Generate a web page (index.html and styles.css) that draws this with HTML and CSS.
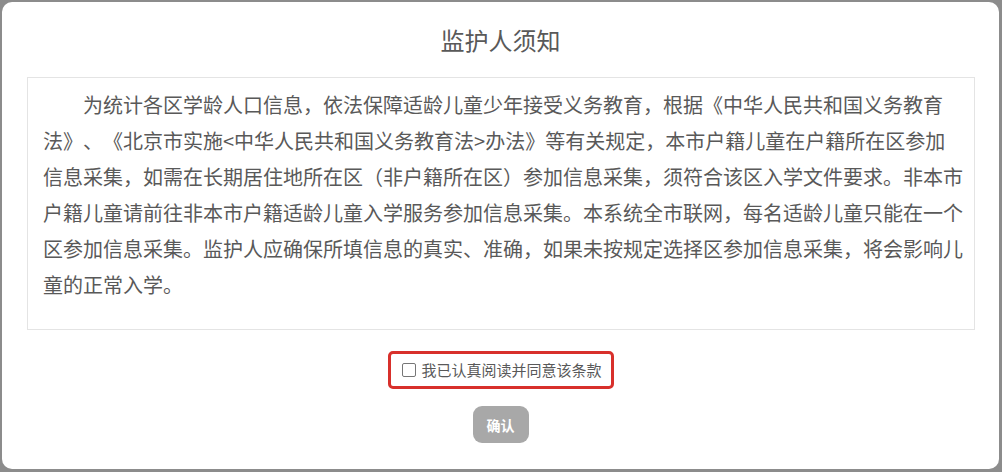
FILE: index.html
```html
<!DOCTYPE html>
<html lang="zh-CN">
<head>
<meta charset="utf-8">
<title>监护人须知</title>
<link rel="stylesheet" href="styles.css">
</head>
<body>
<div class="dialog">
  <h1 class="title">监护人须知</h1>
  <div class="notice">
    <p class="notice-text">为统计各区学龄人口信息，依法保障适龄儿童少年接受义务教育，根据《中华人民共和国义务教育法》、《北京市实施&lt;中华人民共和国义务教育法&gt;办法》等有关规定，本市户籍儿童在户籍所在区参加信息采集，如需在长期居住地所在区（非户籍所在区）参加信息采集，须符合该区入学文件要求。非本市户籍儿童请前往非本市户籍适龄儿童入学服务参加信息采集。本系统全市联网，每名适龄儿童只能在一个区参加信息采集。监护人应确保所填信息的真实、准确，如果未按规定选择区参加信息采集，将会影响儿童的正常入学。</p>
  </div>
  <label class="agree">
    <span class="check"></span>
    <span class="agree-text">我已认真阅读并同意该条款</span>
  </label>
  <button class="confirm" type="button">确认</button>
</div>
</body>
</html>
```
FILE: styles.css
```css
html, body {
  margin: 0;
  padding: 0;
}
body {
  width: 1002px;
  height: 472px;
  background: #8c8c8c;
  font-family: "Noto Sans CJK SC", "Noto Sans", "Liberation Sans", sans-serif;
  color: #595959;
  overflow: hidden;
  text-spacing-trim: space-all;
}
.dialog {
  margin: 2px 3px 0 2px;
  height: 467px;
  background: #fff;
  border-radius: 10px;
  display: flex;
  flex-direction: column;
  align-items: center;
  box-sizing: border-box;
}
.title {
  margin: 22px 0 21px;
  font-size: 24px;
  line-height: 32px;
  font-weight: normal;
  color: #595959;
}
.notice {
  align-self: stretch;
  margin: 0 24px 0 25px;
  border: 1px solid #e4e4e4;
  padding: 9px 10px 26px 15px;
}
.notice-text {
  margin: 0;
  font-size: 20px;
  line-height: 36px;
  text-indent: 2em;
  color: #595959;
  text-spacing-trim: space-all;
}
.agree {
  margin-top: 21px;
  height: 38px;
  width: 226px;
  box-sizing: border-box;
  border: 3px solid #d8302b;
  border-radius: 5px;
  display: flex;
  align-items: center;
  padding-left: 11px;
  gap: 6px;
}
.check {
  width: 12px;
  height: 12px;
  border: 1px solid #767676;
  border-radius: 2px;
  background: #fff;
}
.agree-text {
  font-size: 15px;
  line-height: 20px;
  color: #595959;
}
.confirm {
  margin-top: 17px;
  width: 56px;
  height: 37px;
  border: none;
  border-radius: 9px;
  background: #a8a8a8;
  color: #fff;
  font-family: "Noto Sans CJK SC", sans-serif;
  font-size: 14px;
  font-weight: bold;
  padding: 0;
}
```
